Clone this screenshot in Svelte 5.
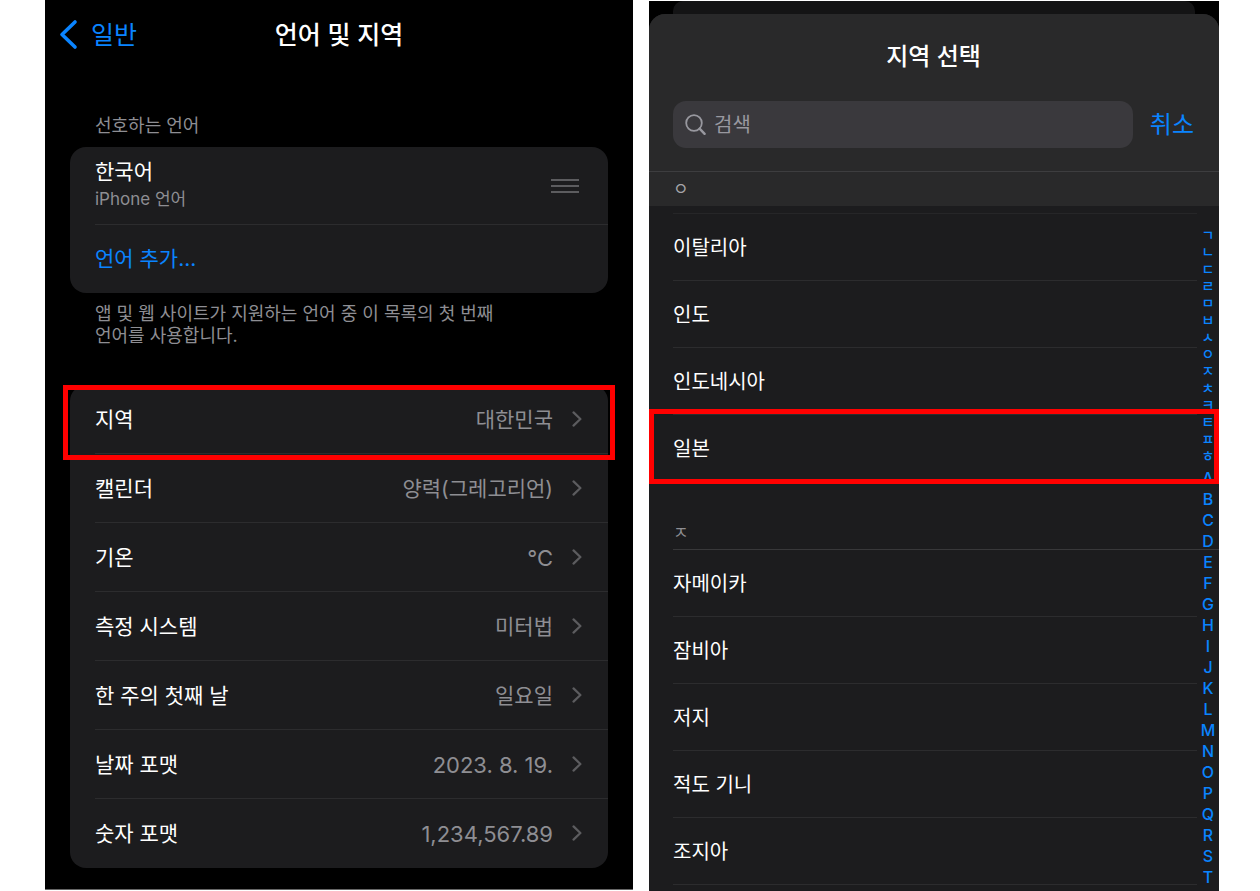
<script>
  const settings = [
    { label: '지역', value: '대한민국', marked: true },
    { label: '캘린더', value: '양력(그레고리언)' },
    { label: '기온', value: '°C', numeric: true },
    { label: '측정 시스템', value: '미터법' },
    { label: '한 주의 첫째 날', value: '일요일' },
    { label: '날짜 포맷', value: '2023. 8. 19.', numeric: true },
    { label: '숫자 포맷', value: '1,234,567.89', numeric: true },
  ];

  const sections = [
    { key: 'ㅇ', regions: ['이탈리아', '인도', '인도네시아', '일본'] },
    { key: 'ㅈ', regions: ['자메이카', '잠비아', '저지', '적도 기니', '조지아'] },
  ];

  const jamo = [...'ㄱㄴㄷㄹㅁㅂㅅㅇㅈㅊㅋㅌㅍㅎ'];
  const latin = [...'ABCDEFGHIJKLMNOPQRST'];

  let query = $state('');
</script>

<main class="page">
  <section class="phone settings">
    <header class="nav">
      <button class="back" type="button">
        <svg width="20" height="32" viewBox="0 0 20 32" aria-hidden="true">
          <path d="M16 3 3 15.5 16 28" fill="none" stroke="currentColor" stroke-width="3.6" stroke-linecap="round" stroke-linejoin="round" />
        </svg>
        일반
      </button>
      <h1>언어 및 지역</h1>
    </header>

    <h2 class="caption">선호하는 언어</h2>
    <div class="card">
      <div class="row language">
        <div class="names">
          <span>한국어</span>
          <small>iPhone 언어</small>
        </div>
        <button class="grip" type="button" aria-label="순서 변경">
          <svg width="28" height="14" viewBox="0 0 28 14" aria-hidden="true">
            <path d="M0 1h28M0 7h28M0 13h28" stroke="currentColor" stroke-width="1.8" />
          </svg>
        </button>
      </div>
      <button class="row add" type="button">언어 추가...</button>
    </div>
    <p class="note">앱 및 웹 사이트가 지원하는 언어 중 이 목록의 첫 번째 언어를 사용합니다.</p>

    <div class="card options">
      {#each settings as item}
        <button class="row option" class:marked={item.marked} type="button">
          <span>{item.label}</span>
          <span class="value" class:numeric={item.numeric}>{item.value}</span>
          <svg width="10" height="18" viewBox="0 0 10 18" aria-hidden="true">
            <path d="M1.5 1.4 8.4 8l-6.9 6.6" fill="none" stroke="currentColor" stroke-width="2.2" stroke-linecap="round" stroke-linejoin="round" />
          </svg>
        </button>
      {/each}
    </div>
  </section>

  <section class="phone picker">
    <div class="behind"></div>
    <div class="sheet">
      <header class="top">
        <h1>지역 선택</h1>
        <div class="search-bar">
          <label class="search">
            <svg width="22" height="22" viewBox="0 0 22 22" aria-hidden="true">
              <circle cx="10" cy="9" r="7.8" fill="none" stroke="currentColor" stroke-width="1.8" />
              <path d="m15.6 14.6 5 5.2" stroke="currentColor" stroke-width="2.4" stroke-linecap="round" />
            </svg>
            <input type="text" placeholder="검색" aria-label="검색" bind:value={query} />
          </label>
          <button class="cancel" type="button">취소</button>
        </div>
      </header>

      <div class="list">
        {#each sections as section, i}
          <h2 class="key" class:pinned={i === 0}>{section.key}</h2>
          <ul class:first={i === 0}>
            {#each section.regions as region}
              <li>
                <button class="region" class:marked={region === '일본'} type="button">
                  <span>{region}</span>
                </button>
              </li>
            {/each}
          </ul>
        {/each}

        <nav class="index" aria-label="색인">
          <div class="jamo">
            {#each jamo as letter}
              <button type="button">{letter}</button>
            {/each}
          </div>
          <div class="latin">
            {#each latin as letter}
              <button type="button">{letter}</button>
            {/each}
          </div>
        </nav>
      </div>
    </div>
  </section>
</main>

<style>
  :global(body) {
    margin: 0;
    background: #fff;
  }
  .page {
    --blue: #0a84ff;
    --surface: #1c1c1e;
    --line: #2c2c2e;
    --gray: #8e8e93;
    display: grid;
    grid-template-columns: 588fr 570fr;
    align-items: start;
    gap: 16px;
    padding: 0 41px 0 45px;
    font-family: Inter, 'Noto Sans CJK KR', sans-serif;
    font-size: 20px;
    line-height: 28px;
    color: #fff;
  }
  h1,
  h2,
  p,
  ul {
    margin: 0;
    padding: 0;
  }
  h1 {
    font-size: 24px;
    font-weight: 500;
    text-align: center;
  }
  button {
    appearance: none;
    background: none;
    border: none;
    margin: 0;
    padding: 0;
    font: inherit;
    color: inherit;
    text-align: left;
    cursor: pointer;
  }
  svg {
    display: block;
    flex: none;
  }

  .settings {
    background: #000;
    border-bottom: 1px solid #666;
    padding: 0 25px 21px;
    font-size: 21px;
  }
  .nav {
    display: grid;
    grid-template-columns: 1fr auto 1fr;
    align-items: center;
    height: 70px;
    margin: 0 -11px;
  }
  .nav h1 {
    font-size: 25px;
  }
  .back {
    display: flex;
    align-items: center;
    gap: 12px;
    font-size: 25px;
    color: var(--blue);
  }
  .caption {
    margin: 45px 0 10px;
    padding: 0 25px;
    font-size: 18px;
    font-weight: 400;
    line-height: 22px;
    color: var(--gray);
  }
  .card {
    background: var(--surface);
    border-radius: 16px;
  }
  .row {
    position: relative;
    display: flex;
    align-items: center;
    box-sizing: border-box;
    width: 100%;
    padding: 0 26px 0 25px;
  }
  .row:not(:last-child)::after {
    content: '';
    position: absolute;
    left: 25px;
    right: 0;
    bottom: 0;
    height: 1px;
    background: var(--line);
  }
  .language {
    height: 78px;
    padding-right: 29px;
  }
  .names {
    display: flex;
    flex-direction: column;
    flex: 1;
    padding-bottom: 2px;
  }
  small {
    font-size: 17px;
    line-height: 26px;
    color: var(--gray);
  }
  .grip {
    color: #5c5c5f;
  }
  .add {
    height: 68px;
    color: var(--blue);
  }
  .note {
    max-width: 430px;
    margin: 10px 0 38px;
    padding: 0 25px;
    font-size: 18px;
    line-height: 22px;
    word-break: keep-all;
    color: var(--gray);
  }
  .option {
    height: 69px;
    gap: 19px;
  }
  .option svg {
    color: #5c5c5f;
  }
  .value {
    flex: 1;
    text-align: right;
    color: var(--gray);
  }
  .numeric {
    font-size: 22px;
  }
  .marked::before {
    content: '';
    position: absolute;
    z-index: 2;
    inset: 0 -7px -6px;
    border: 5px solid #f00;
  }

  .picker {
    margin-top: 1px;
    background: #000;
    overflow: hidden;
  }
  .behind {
    height: 13px;
    margin: 0 24px;
    border-radius: 10px 10px 0 0;
    background: #141415;
  }
  .sheet {
    background: var(--surface);
    border-radius: 16px 16px 0 0;
    overflow: hidden;
  }
  .top {
    box-sizing: border-box;
    height: 158px;
    padding: 29px 25px 0 24px;
    background: #29292a;
    border-bottom: 1px solid #3d3d3f;
  }
  .search-bar {
    display: flex;
    align-items: center;
    gap: 17px;
    margin-top: 30px;
  }
  .search {
    display: flex;
    align-items: center;
    gap: 8px;
    flex: 1;
    height: 47px;
    padding: 0 11px;
    border-radius: 13px;
    background: #3a393d;
    color: #98989f;
  }
  .search input {
    flex: 1;
    min-width: 0;
    padding: 0;
    border: none;
    outline: none;
    background: none;
    font: inherit;
    color: #fff;
  }
  .search input::placeholder {
    color: #98989f;
    opacity: 1;
  }
  .cancel {
    font-size: 24px;
    color: var(--blue);
  }
  .list {
    position: relative;
    padding-bottom: 6px;
  }
  .key {
    box-sizing: border-box;
    height: 68px;
    margin-left: 24px;
    padding-top: 37px;
    border-bottom: 1px solid #38383a;
    font-size: 17px;
    font-weight: 400;
    color: var(--gray);
  }
  .key.pinned {
    height: 34px;
    margin-left: 0;
    padding: 3px 24px 0;
    border: none;
    background: #29292a;
    color: #a5a5a9;
  }
  ul {
    list-style: none;
  }
  ul.first {
    padding-top: 8px;
    background: linear-gradient(#262628, #262628) 24px 7px / calc(100% - 46px) 1px no-repeat;
  }
  .region {
    position: relative;
    display: flex;
    align-items: center;
    box-sizing: border-box;
    width: 100%;
    height: 67px;
    padding: 0 22px 0 24px;
  }
  .region::after {
    content: '';
    position: absolute;
    left: 24px;
    right: 22px;
    bottom: 0;
    height: 1px;
    background: var(--line);
  }
  .region.marked::before {
    inset: -6px 0 -2px;
  }
  .region.marked::after {
    display: none;
  }
  .index {
    position: absolute;
    top: 54px;
    right: 0;
    display: flex;
    flex-direction: column;
    gap: 4px;
    width: 22px;
    color: var(--blue);
    font-weight: 500;
  }
  .index button {
    display: block;
    width: 100%;
    text-align: center;
  }
  .jamo {
    font-size: 14px;
    line-height: 17px;
  }
  .latin {
    font-size: 16px;
    line-height: 21px;
  }
</style>
